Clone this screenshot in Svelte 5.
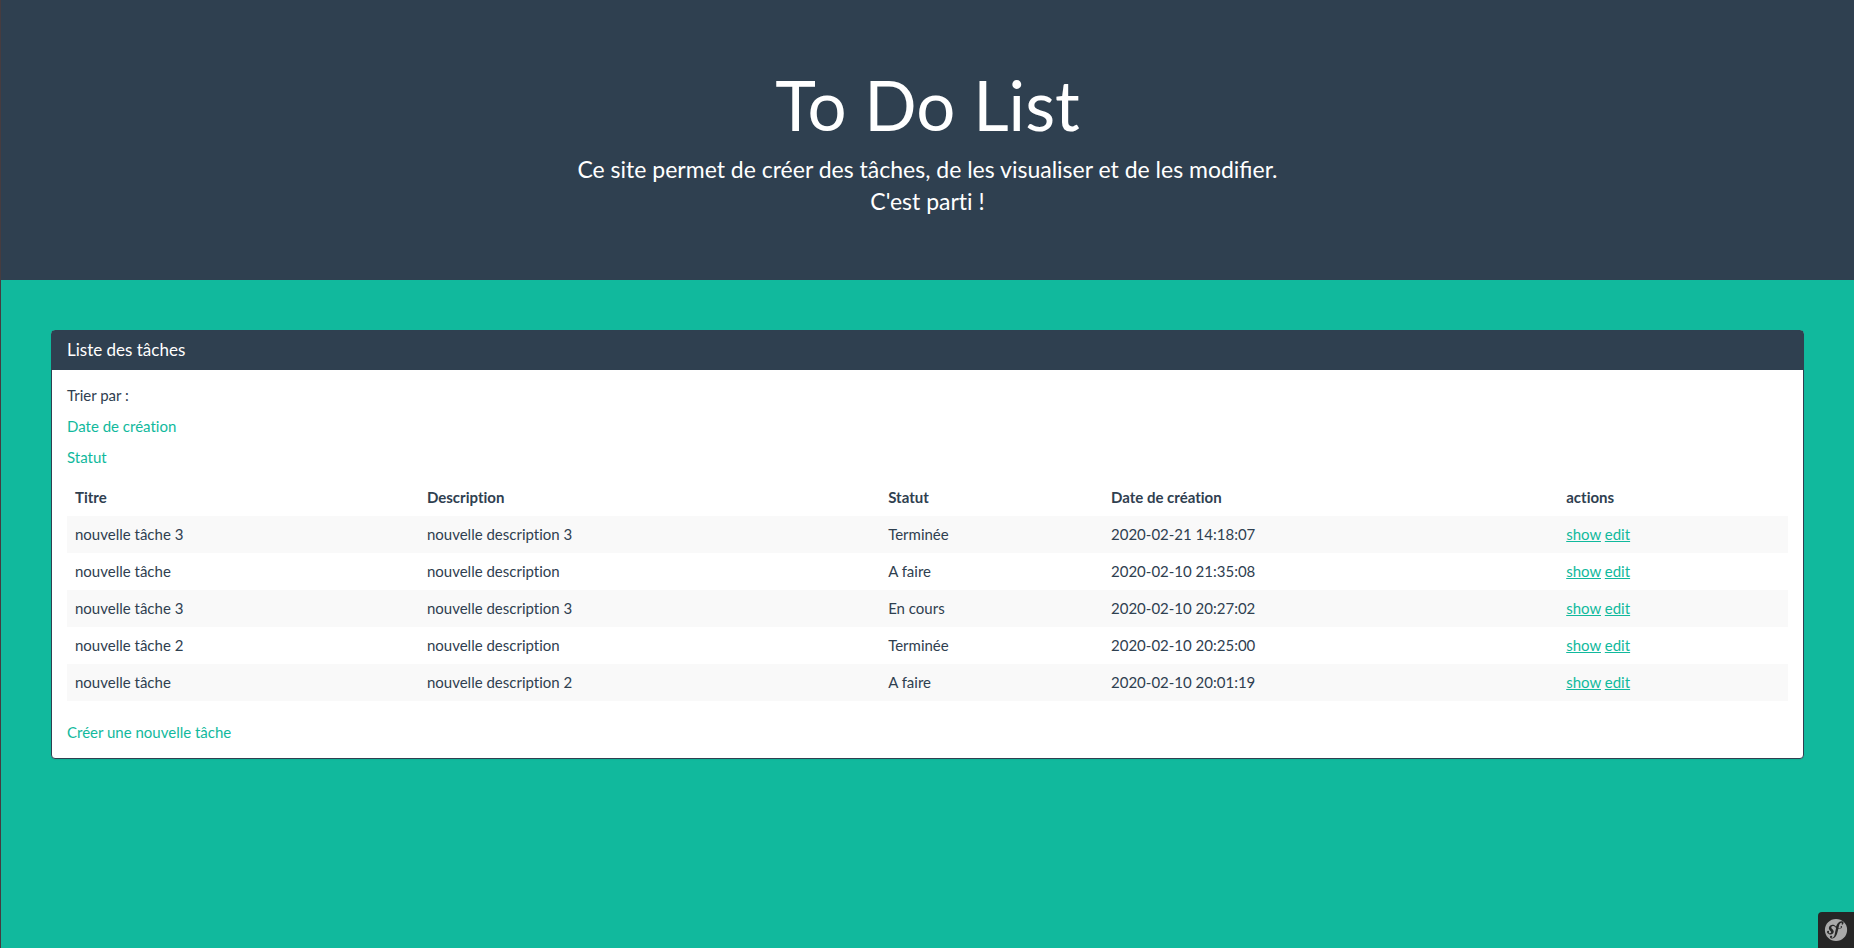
<script>
  const columns = [
    { label: 'Titre', width: 20.45 },
    { label: 'Description', width: 26.8 },
    { label: 'Statut', width: 12.95 },
    { label: 'Date de création', width: 26.45 },
    { label: 'actions', width: 13.35 }
  ];

  const tasks = [
    { title: 'nouvelle tâche 3', description: 'nouvelle description 3', status: 'Terminée', created: '2020-02-21 14:18:07' },
    { title: 'nouvelle tâche', description: 'nouvelle description', status: 'A faire', created: '2020-02-10 21:35:08' },
    { title: 'nouvelle tâche 3', description: 'nouvelle description 3', status: 'En cours', created: '2020-02-10 20:27:02' },
    { title: 'nouvelle tâche 2', description: 'nouvelle description', status: 'Terminée', created: '2020-02-10 20:25:00' },
    { title: 'nouvelle tâche', description: 'nouvelle description 2', status: 'A faire', created: '2020-02-10 20:01:19' }
  ];
</script>

<div class="page">
  <header class="hero">
    <h1>To Do List</h1>
    <p class="intro">Ce site permet de créer des tâches, de les visualiser et de les modifier.</p>
    <p>C'est parti !</p>
  </header>

  <main>
    <section class="panel">
      <h2>Liste des tâches</h2>
      <div class="panel-body">
        <div class="sort">
          <p>Trier par :</p>
          <p><a href="#date">Date de création</a></p>
          <p><a href="#statut">Statut</a></p>
        </div>
        <table>
          <thead>
            <tr>
              {#each columns as column}
                <th style:width="{column.width}%">{column.label}</th>
              {/each}
            </tr>
          </thead>
          <tbody>
            {#each tasks as task}
              <tr>
                <td>{task.title}</td>
                <td>{task.description}</td>
                <td>{task.status}</td>
                <td>{task.created}</td>
                <td class="actions"><a href="#show">show</a> <a href="#edit">edit</a></td>
              </tr>
            {/each}
          </tbody>
        </table>
        <a href="#new">Créer une nouvelle tâche</a>
      </div>
    </section>
  </main>

  <button class="toolbar" type="button">
    <svg viewBox="0 0 24 24" width="24" height="24" aria-hidden="true">
      <path fill="#aaa" d="M12 .9C5.8.9.9 5.8.9 12a11 11 0 1 0 22.2 0A11 11 0 0 0 12 .9zm6.5 6c-.6 0-.9-.3-.9-.8 0-.2 0-.4.2-.6l.2-.4c0-.3-.5-.4-.6-.4-1.8.1-2.3 2.5-2.7 4.4l-.2 1c1 .2 1.8 0 2.2-.3.6-.4-.2-.7-.1-1.2.1-.3.5-.5.7-.6.5 0 .7.5.7.9 0 .7-1 1.8-3 1.8l-.6-.1-.6 2.4c-.4 1.6-.8 3.8-2.4 5.7-1.4 1.7-2.9 1.9-3.5 1.9-1.2 0-1.9-.6-2-1.5 0-.9.8-1.4 1.3-1.4.6 0 1 .4 1 1s-.2.6-.4.7c-.1.1-.3.2-.3.4 0 .1.1.3.4.3.5 0 .8-.3 1.1-.5 1.2-.9 1.6-2.7 2.2-5.7l.1-.7c.2-1 .5-2 .8-3.2-1-.7-1.4-1.5-2.7-1.9-.9-.3-1.4 0-1.8.5-.5.6-.3 1.3.1 1.8l.8.8c.9 1 1.4 1.8 1.2 2.8-.3 1.6-2.2 2.9-4.5 2.2-1.9-.6-2.3-2-2.1-2.7.2-.7.8-.9 1.3-.7.5.2.8.8.6 1.3 0 .1 0 .2-.1.3-.1.1-.2.2-.2.3-.1.3.4.5.7.6.7.2 1.5-.2 1.7-.7.2-.5-.1-.9-.3-1l-.9-1c-.4-.4-1.4-1.7-.9-3.3a4 4 0 0 1 1.3-1.9c1-.7 2-.8 3-.6 1.3.4 1.9 1.2 2.7 1.9.5-1.3 1.1-2.6 2-3.6.8-1 2-1.8 3.3-1.9 1.3 0 2.3.6 2.3 1.5 0 .5-.2 1.2-.9 1.2z" />
    </svg>
  </button>
</div>

<style>
  .page {
    --navy: #2f4050;
    --teal: #11b99d;
    box-sizing: border-box;
    min-height: 100vh;
    border-left: 1px solid #463c40;
    background: var(--teal);
    color: var(--navy);
    font: 15px/21px Lato, sans-serif;
    font-variant-ligatures: none;
  }

  h1,
  h2,
  p {
    margin: 0;
    font-weight: 400;
  }

  a {
    color: var(--teal);
    text-decoration: none;
  }

  .hero {
    padding: 67px 15px 63px;
    background: var(--navy);
    color: #fff;
    text-align: center;
  }

  .hero h1 {
    margin-bottom: 10px;
    font-size: 69px;
    line-height: 76px;
  }

  .hero p {
    font-size: 23px;
    line-height: 32px;
  }

  .intro {
    font-variant-ligatures: normal;
  }

  main {
    padding: 50px;
  }

  .panel {
    border: 1px solid var(--navy);
    border-radius: 4px;
    background: #fff;
    box-shadow: 0 1px 1px rgba(0, 0, 0, 0.05);
  }

  .panel h2 {
    padding: 9px 15px 11px;
    background: var(--navy);
    color: #fff;
    font-size: 17px;
    line-height: 19px;
  }

  .panel-body {
    padding: 15px;
  }

  .sort {
    display: grid;
    gap: 10px;
    margin-bottom: 11px;
  }

  table {
    width: 100%;
    margin-bottom: 21px;
    border-collapse: collapse;
  }

  th,
  td {
    padding: 8px;
    text-align: left;
  }

  tbody tr:nth-child(odd) {
    background: #f9f9f9;
  }

  .actions a {
    text-decoration: underline;
  }

  .toolbar {
    position: fixed;
    right: 0;
    bottom: 0;
    display: grid;
    place-items: center;
    width: 36px;
    height: 36px;
    padding: 0;
    border: 0;
    border-top-left-radius: 4px;
    background: #262626;
  }
</style>
